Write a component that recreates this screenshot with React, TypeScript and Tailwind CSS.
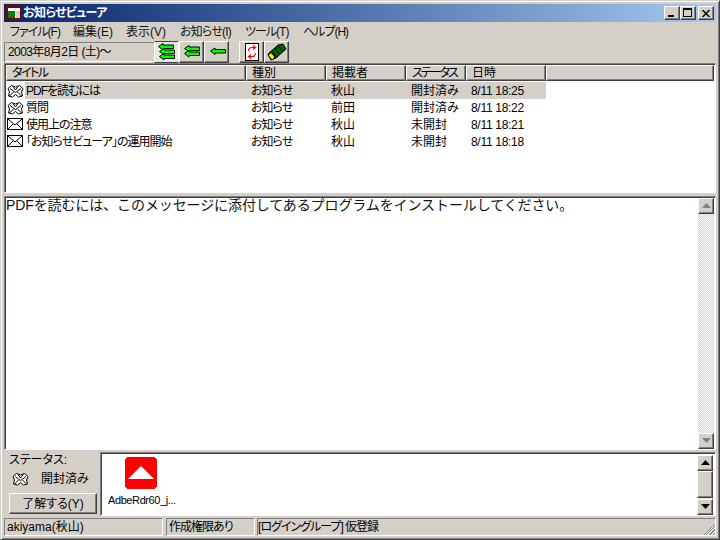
const FONT = "[font-family:'Liberation_Sans','Noto_Sans_CJK_JP',sans-serif] [font-feature-settings:'palt']";
const raised = "border border-t-white border-l-white border-r-[#404040] border-b-[#404040] shadow-[inset_-1px_-1px_0_#808080]";
const dither = "bg-[repeating-conic-gradient(#d4d0c8_0%_25%,#ffffff_0%_50%)] bg-size-[2px_2px]";

function Envelope() {
  return (
    <svg width="16" height="13" viewBox="0 0 16 13" shapeRendering="crispEdges" className="shrink-0">
      <rect x="0.5" y="0.5" width="15" height="11" fill="#fff" stroke="#000" />
      <path d="M1 1 L8 7 L15 1 M1 11 L6 6 M15 11 L10 6" fill="none" stroke="#000" shapeRendering="auto" />
    </svg>
  );
}
function OpenEnv() {
  return (
    <svg width="17" height="14" viewBox="0 0 17 14" className="shrink-0">
      <path d="M1 4.500 L4.500 1.500 L8.500 3 L12.500 1.500 L16 4.500 L14.500 8 L15.500 12 L11.500 13 L8.500 10.500 L5.500 13 L1.500 12 L2.500 8 Z" fill="#fff" stroke="#000" strokeWidth="1" />
      <path d="M3 4.500 L8.500 8.500 L14 4.500 M6 2.500 L8.500 6 L11 2.500 M2.500 12 L6.500 8 M14.500 12 L10.500 8" fill="none" stroke="#000" strokeWidth="1" />
    </svg>
  );
}
function Arrow({ n }: { n: number }) {
  const rows = n === 3 ? [1, 6, 11] : n === 2 ? [3, 8] : [5.5];
  return (
    <svg width="18" height="18" viewBox="0 0 18 18">
      {rows.map((y, i) => (
        <path key={i} transform={`translate(${n === 1 ? 2 : n === 2 ? 1 : i === 0 ? 0 : 1},${y - 1})`} d="M0.500 3.500 L5 0.500 L5 2 L15.500 2 L15.500 5.500 L5 5.500 L5 7 Z" fill="#00ff00" stroke="#000" strokeWidth="1" />
      ))}
    </svg>
  );
}
function Refresh() {
  return (
    <svg width="16" height="18" viewBox="0 0 16 18">
      <rect x="1.500" y="0.500" width="13" height="17" fill="#fff" stroke="#000" />
      <path d="M4.500 8 A3.500 3.500 0 0 1 8 4.500 H11 M9 2.500 L11.500 4.500 L9 6.500 M11.500 10 A3.500 3.500 0 0 1 8 13.500 H5 M7 11.500 L4.500 13.500 L7 15.500" fill="none" stroke="#f00" strokeWidth="1.200" />
    </svg>
  );
}
function Eraser() {
  return (
    <svg width="20" height="18" viewBox="0 0 20 18">
      <path d="M1 11 L11 2 L16 1 L19 6 L9 15 L4 17 Z" fill="#006400" stroke="#000" />
      <path d="M5 8 L10 15 M8 5 L13 12 M11 3 L16 9" fill="none" stroke="#000" />
      <path d="M1 12 L4 9.500 L8 14 L5 17 Z" fill="#f0f000" stroke="#000" />
    </svg>
  );
}
function Tri({ up, disabled }: { up: boolean; disabled?: boolean }) {
  return (
    <svg width="9" height="6" viewBox="0 0 9 6">
      <path d={up ? "M4.500 0 L9 5 L0 5 Z" : "M0 0 L9 0 L4.500 5 Z"} fill={disabled ? "#808080" : "#000"} />
    </svg>
  );
}
function SBtn({ up, disabled }: { up: boolean; disabled?: boolean }) {
  return (
    <div className={`h-[16px] w-[16px] shrink-0 bg-[#d4d0c8] flex items-center justify-center ${raised}`}>
      <Tri up={up} disabled={disabled} />
    </div>
  );
}
function ToolBtn({ children, active }: { children: React.ReactNode; active?: boolean }) {
  return (
    <div className={`h-[22px] w-[25px] flex items-center justify-center ${active ? "bg-[#e8e6e0] border border-t-[#404040] border-l-white border-r-white border-b-[#404040]" : raised}`}>
      {children}
    </div>
  );
}

const cols = [
  ["タイトル", "w-[240px]", "tracking-[-1.500px]"],
  ["種別", "w-[80px]", ""],
  ["掲載者", "w-[80px]", ""],
  ["ステータス", "w-[60px]", "tracking-[-2px]"],
  ["日時", "w-[80px]", ""],
];
const rows = [
  { t: "PDFを読むには", a: "秋山", s: "開封済み", d: "8/11 18:25", open: true, sel: true },
  { t: "質問", a: "前田", s: "開封済み", d: "8/11 18:22", open: true },
  { t: "使用上の注意", a: "秋山", s: "未開封", d: "8/11 18:21" },
  { t: "「お知らせビューア」の運用開始", a: "秋山", s: "未開封", d: "8/11 18:18" },
];
const menus = [
  ["ファイル(F)", "w-[63px] tracking-[-1px]"],
  ["編集(E)", "w-[53px]"],
  ["表示(V)", "w-[54px]"],
  ["お知らせ(I)", "w-[65px] tracking-[-0.800px]"],
  ["ツール(T)", "w-[58px] tracking-[-1px]"],
  ["ヘルプ(H)", "tracking-[-1px]"],
];

export default function App() {
  return (
    <div className={`${FONT} h-[540px] w-[720px] overflow-hidden whitespace-nowrap bg-[#d4d0c8] text-[12px] leading-none text-black border border-b-[#404040] border-r-[#404040] border-t-[#d4d0c8] border-l-[#d4d0c8] p-[3px] shadow-[inset_1px_1px_0_#fff,inset_-1px_-1px_0_#808080] flex flex-col`}>
      <div className="h-[18px] shrink-0 bg-linear-to-r from-[#0a246a] to-[#a6caf0] flex items-center pl-[2px] pr-[2px] text-white font-bold">
        <svg width="16" height="14" viewBox="0 0 16 14" shapeRendering="crispEdges" className="mr-[1px]">
          <rect width="16" height="14" fill="#800000" />
          <rect x="2" y="2" width="12" height="10" fill="#fff" />
          <rect x="2" y="5" width="7" height="7" fill="#008000" />
          <rect x="10" y="5" width="4" height="7" fill="#c0dcc0" />
        </svg>
        <span className="text-[12px] tracking-[-0.600px]">お知らせビューア</span>
        <div className="ml-auto flex items-center">
          {["min", "max"].map((k) => (
            <div key={k} className={`h-[14px] w-[16px] bg-[#d4d0c8] relative ${raised}`}>
              {k === "min" ? <div className="absolute left-[3px] bottom-[2px] h-[2px] w-[6px] bg-black" /> : <div className="absolute left-[2px] top-[1px] h-[9px] w-[9px] border border-black border-t-2" />}
            </div>
          ))}
          <div className={`ml-[2px] h-[14px] w-[16px] bg-[#d4d0c8] flex items-center justify-center ${raised}`}>
            <svg width="8" height="7" viewBox="0 0 8 7"><path d="M0.500 0 L7.500 7 M7.500 0 L0.500 7" stroke="#000" strokeWidth="1.500" /></svg>
          </div>
        </div>
      </div>

      <div className="h-[19px] shrink-0 flex items-center text-[12px] pl-[6px]">
        {menus.map(([m, c]) => (
          <span key={m} className={`${c} text-[#111]`}>{m}</span>
        ))}
      </div>

      <div className="h-[22px] shrink-0 flex items-center">
        <div className="h-[20px] w-[150px] flex items-center pl-[4px] tracking-[-0.600px] shadow-[inset_1px_1px_0_#808080,inset_0_-1px_0_#fff]">2003年8月2日 (土)～</div>
        <ToolBtn active><Arrow n={3} /></ToolBtn>
        <ToolBtn><Arrow n={2} /></ToolBtn>
        <ToolBtn><Arrow n={1} /></ToolBtn>
        <div className="w-[10px]" />
        <ToolBtn><Refresh /></ToolBtn>
        <ToolBtn><Eraser /></ToolBtn>
      </div>

      <div className="h-[130px] shrink-0 bg-white border border-t-[#808080] border-l-[#808080] border-r-white border-b-white shadow-[inset_1px_1px_0_#404040] pl-[1px] pt-[1px] pr-[1px]">
        <div className="h-[16px] flex bg-[#d4d0c8]">
          {cols.map(([c, w, t]) => (
            <div key={c} className={`${w} ${t} flex items-center pl-[5px] ${raised}`}>{c}</div>
          ))}
          <div className={`flex-1 ${raised}`} />
        </div>
        <div className="pt-[1px]">
          {rows.map((r) => (
            <div key={r.t} className="h-[17px] flex items-center w-[540px]">
              <div className="w-[19px] pl-[1px] flex items-center justify-start"><span>{r.open ? <OpenEnv /> : <Envelope />}</span></div>
              <div className={`flex h-full flex-1 items-center pl-[1px] ${r.sel ? "bg-[#d4d0c8]" : ""}`}>
                <span className="w-[225px] tracking-[-1px]">{r.t}</span>
                <span className="w-[80px] tracking-[-1px]">お知らせ</span>
                <span className="w-[80px]">{r.a}</span>
                <span className="w-[60px]">{r.s}</span>
                <span className="tracking-[-0.300px]">{r.d}</span>
              </div>
            </div>
          ))}
        </div>
      </div>

      <div className="h-[3px] shrink-0" />

      <div className="h-[254px] shrink-0 bg-white flex border border-t-[#808080] border-l-[#808080] border-r-white border-b-white shadow-[inset_1px_1px_0_#404040] pl-[1px] pt-[1px] pr-[1px]">
        <div className="flex-1 text-[14px] leading-[14px] font-normal text-[#111] [font-feature-settings:normal] tracking-[-0.100px]">PDFを読むには、このメッセージに添付してあるプログラムをインストールしてください。</div>
        <div className={`w-[16px] flex flex-col justify-between ${dither}`}>
          <SBtn up disabled />
          <SBtn up={false} disabled />
        </div>
      </div>

      <div className="flex-1 flex pt-[2px] min-h-0">
        <div className="w-[96px] shrink-0 flex flex-col pl-[5px]">
          <div className="h-[16px] flex items-center">ステータス:</div>
          <div className="h-[21px] flex items-center pl-[3px] gap-[12px]">
            <OpenEnv />
            <span>開封済み</span>
          </div>
          <div className={`mt-[4px] h-[21px] w-[88px] flex items-center justify-center ${raised}`}>了解する(Y)</div>
        </div>
        <div className="flex-1 h-[64px] bg-white flex border border-t-[#808080] border-l-[#808080] border-r-white border-b-white shadow-[inset_1px_1px_0_#404040] pl-[1px] pt-[1px]">
          <div className="flex-1 pl-[6px] pt-[3px] flex flex-col items-start">
            <svg width="32" height="32" viewBox="0 0 32 32" className="ml-[17px]" shapeRendering="crispEdges">
              <rect width="32" height="32" rx="4" fill="#ff0000" />
              <path d="M3 22 L16 9 L29 22 Z" fill="#fff" shapeRendering="auto" />
            </svg>
            <span className="mt-[6px] text-[11px] tracking-[-0.400px]">AdbeRdr60_j...</span>
          </div>
          <div className="w-[16px] flex flex-col bg-[#d4d0c8] mr-[2px] mt-[1px]">
            <SBtn up />
            <div className={`h-[27px] shrink-0 ${raised}`} />
            <div className={`flex-1 ${dither}`} />
            <SBtn up={false} />
          </div>
        </div>
      </div>

      <div className="h-[20px] shrink-0 flex items-center pt-[1px] relative">
        <div className="h-[18px] w-[159px] flex items-center pl-[2px] border border-t-[#808080] border-l-[#808080] border-r-white border-b-white">akiyama(秋山)</div>
        <div className="h-[18px] w-[89px] ml-[3px] flex items-center pl-[2px] tracking-[-1px] border border-t-[#808080] border-l-[#808080] border-r-white border-b-white">作成権限あり</div>
        <div className="h-[18px] flex-1 ml-[2px] flex items-center tracking-[-1px] border border-t-[#808080] border-l-[#808080] border-r-white border-b-white">[ログイングループ] 仮登録</div>
        <svg width="13" height="13" viewBox="0 0 13 13" className="absolute right-0 bottom-0">
          <path d="M12 1 L1 12 M12 3 L3 12 M12 6 L6 12 M12 7 L7 12 M12 10 L10 12" stroke="#808080" fill="none" />
          <path d="M12 2 L2 12 M12 5 L5 12 M12 8 L8 12" stroke="#fff" fill="none" />
        </svg>
      </div>
    </div>
  );
}
